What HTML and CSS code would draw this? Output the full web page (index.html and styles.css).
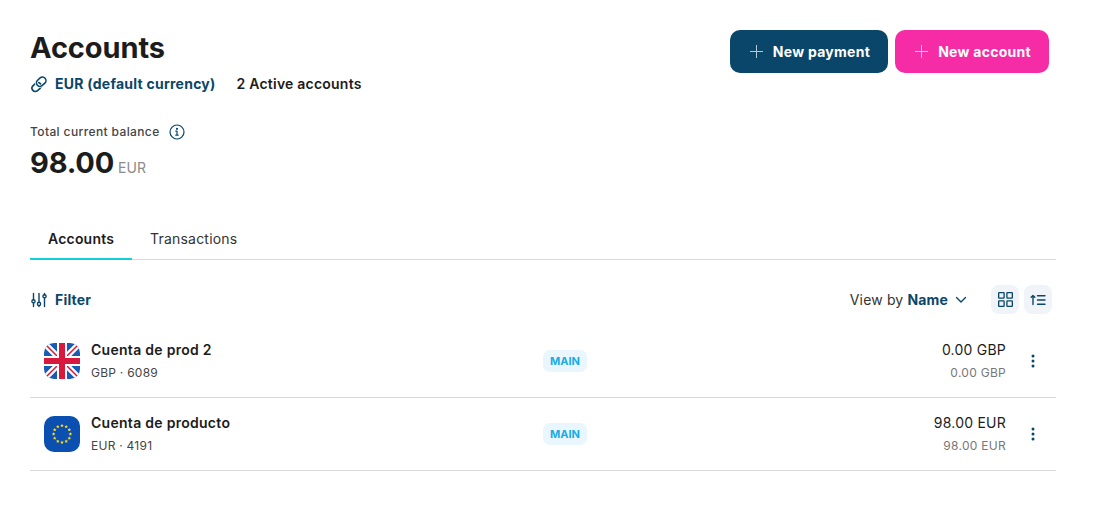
FILE: index.html
```html
<!DOCTYPE html>
<html lang="en">
<head>
  <meta charset="UTF-8" />
  <title>Accounts</title>
  <link rel="stylesheet" href="styles.css">
</head>
<body>

<div class="page">
  <div class="top">
    <div>
      <h1 class="title">Accounts</h1>
      <div class="meta">
        <span class="currency">
          <svg width="18" height="18" viewBox="0 0 18 18" fill="none" stroke-width="1.6">
            <rect x="1.6" y="8.7" width="10" height="6.6" rx="3.3" transform="rotate(-42 6.6 12)" stroke="#0a4669"/>
            <rect x="6" y="3.2" width="10.4" height="7" rx="3.5" transform="rotate(-42 11.2 6.7)" stroke="#fff" stroke-width="3"/>
            <rect x="6" y="3.2" width="10.4" height="7" rx="3.5" transform="rotate(-42 11.2 6.7)" stroke="#0a4669"/>
          </svg>
          EUR (default currency)
        </span>
        <span class="active">2 Active accounts</span>
      </div>
    </div>
    <div class="actions">
      <button class="btn btn-navy"><span class="plus"></span>New payment</button>
      <button class="btn btn-pink"><span class="plus"></span>New account</button>
    </div>
  </div>

  <div class="balance-label">
    Total current balance
    <svg width="16" height="16" viewBox="0 0 16 16" fill="none" stroke="#0a4669" stroke-width="1.2"><circle cx="8" cy="8" r="7"/><path d="M8 7.2v4M6.8 11.2h2.4M6.8 7.2H8" stroke-linecap="round"/><circle cx="8" cy="4.8" r=".5" fill="#0a4669"/></svg>
  </div>
  <div class="balance"><span class="amount">98.00</span><span class="unit">EUR</span></div>

  <div class="tabs">
    <div class="tab tab-on">Accounts</div>
    <div class="tab">Transactions</div>
  </div>

  <div class="tools">
    <div class="filter">
      <svg width="18" height="18" viewBox="0 0 18 18" fill="none" stroke="#0a4669" stroke-width="1.4" stroke-linecap="round"><path d="M3.5 2.5v6.2M3.5 12v3.5M9 2.5v8.7M9 14.6v.9M14.5 2.5v1.2M14.5 7v8.5"/><circle cx="3.5" cy="10.3" r="1.6"/><circle cx="9" cy="12.9" r="1.6"/><circle cx="14.5" cy="5.3" r="1.6"/></svg>
      Filter
    </div>
    <div class="view">
      <span class="view-by">View by <strong>Name</strong></span>
      <svg class="chev" width="12" height="8" viewBox="0 0 12 8" fill="none" stroke="#0a4669" stroke-width="1.4" stroke-linecap="round" stroke-linejoin="round"><path d="M1.5 1.5 6 6l4.5-4.5"/></svg>
      <span class="icon-btn">
        <svg width="15" height="15" viewBox="0 0 16 16" fill="none" stroke="#0a4669" stroke-width="1.4"><rect x=".7" y=".7" width="5.8" height="5.8" rx=".6"/><rect x="9.5" y=".7" width="5.8" height="5.8" rx=".6"/><rect x=".7" y="9.5" width="5.8" height="5.8" rx=".6"/><rect x="9.5" y="9.5" width="5.8" height="5.8" rx=".6"/></svg>
      </span>
      <span class="icon-btn">
        <svg width="16" height="16" viewBox="0 0 16 16" fill="none" stroke="#0a4669" stroke-width="1.4" stroke-linecap="round" stroke-linejoin="round"><path d="M3 12.5v-9M1.2 5.2 3 3.4l1.8 1.8M7.5 3.7h7.5M7.5 8h7.5M7.5 12.3h7.5"/></svg>
      </span>
    </div>
  </div>

  <div class="row">
    <svg class="flag" width="36" height="36" viewBox="0 0 36 36">
      <rect width="36" height="36" fill="#1a5bb5"/>
      <path d="M0 0 36 36M36 0 0 36" stroke="#fff" stroke-width="6"/>
      <path d="M0 0 36 36M36 0 0 36" stroke="#d8183c" stroke-width="1.5"/>
      <path d="M18 0v36M0 18h36" stroke="#fff" stroke-width="10"/>
      <path d="M18 0v36M0 18h36" stroke="#d8183c" stroke-width="6"/>
    </svg>
    <div class="acct">
      <div class="acct-name">Cuenta de prod 2</div>
      <div class="acct-sub">GBP · 6089</div>
    </div>
    <span class="badge">MAIN</span>
    <div class="money">
      <div class="money-main">0.00 GBP</div>
      <div class="money-sub">0.00 GBP</div>
    </div>
    <svg class="dots" width="4" height="14" viewBox="0 0 4 14" fill="#0a4669"><circle cx="2" cy="2" r="1.5"/><circle cx="2" cy="7" r="1.5"/><circle cx="2" cy="12" r="1.5"/></svg>
  </div>

  <div class="row">
    <svg class="flag" width="36" height="36" viewBox="0 0 36 36" fill="#ffdb1a">
      <defs><polygon id="star" points="0,-1.8 .55,-.7 1.7,-.55 .9,.3 1.05,1.5 0,.9 -1.05,1.5 -.9,.3 -1.7,-.55 -.55,-.7"/></defs>
      <rect width="36" height="36" fill="#0b4fb0"/>
      <use href="#star" x="18" y="9.6"/><use href="#star" x="22.2" y="10.7"/><use href="#star" x="25.3" y="13.8"/>
      <use href="#star" x="26.4" y="18"/><use href="#star" x="25.3" y="22.2"/><use href="#star" x="22.2" y="25.3"/>
      <use href="#star" x="18" y="26.4"/><use href="#star" x="13.8" y="25.3"/><use href="#star" x="10.7" y="22.2"/>
      <use href="#star" x="9.6" y="18"/><use href="#star" x="10.7" y="13.8"/><use href="#star" x="13.8" y="10.7"/>
    </svg>
    <div class="acct">
      <div class="acct-name">Cuenta de producto</div>
      <div class="acct-sub">EUR · 4191</div>
    </div>
    <span class="badge">MAIN</span>
    <div class="money">
      <div class="money-main">98.00 EUR</div>
      <div class="money-sub">98.00 EUR</div>
    </div>
    <svg class="dots" width="4" height="14" viewBox="0 0 4 14" fill="#0a4669"><circle cx="2" cy="2" r="1.5"/><circle cx="2" cy="7" r="1.5"/><circle cx="2" cy="12" r="1.5"/></svg>
  </div>
</div>

</body>
</html>
```

FILE: styles.css
```css
body {
  margin: 0;
  background: white;
  font-family: Inter, 'Liberation Sans', sans-serif;
  color: #1c1c1c;
  letter-spacing: 0.28px;
}
.page {
  width: 1026px;
  padding: 30px 47px 0 30px;
}
.top {
  display: flex;
  justify-content: space-between;
  align-items: flex-start;
}
.title {
  margin: 0;
  font-size: 29px;
  line-height: 36px;
  font-weight: 700;
  letter-spacing: -0.1px;
}
.meta {
  display: flex;
  gap: 21px;
  margin-top: 7px;
  font-size: 14px;
  line-height: 22px;
  font-weight: 600;
  letter-spacing: 0.22px;
}
.currency {
  display: flex;
  align-items: center;
  gap: 7px;
  font-weight: 700;
  letter-spacing: 0.25px;
  color: #0a4669;
}
.actions {
  display: flex;
  gap: 7px;
  margin-right: 7px;
}
.btn {
  display: flex;
  align-items: center;
  height: 43px;
  padding: 0 18px 0 20px;
  border: 0;
  border-radius: 10px;
  color: white;
  font-family: inherit;
  font-size: 14px;
  font-weight: 700;
  letter-spacing: 0.28px;
}
.btn-navy {
  background: #0a4669;
}
.btn-pink {
  background: #f52ca5;
}
.plus {
  width: 13px;
  height: 13px;
  margin-right: 10px;
  opacity: 0.7;
  background:
    linear-gradient(white, white) center / 100% 1.4px no-repeat,
    linear-gradient(white, white) center / 1.4px 100% no-repeat;
}
.balance-label {
  display: flex;
  align-items: center;
  gap: 9px;
  margin-top: 27px;
  font-size: 12px;
  line-height: 20px;
  font-weight: 500;
  letter-spacing: 0.38px;
  color: #444;
}
.balance {
  display: flex;
  align-items: baseline;
  gap: 4px;
  margin-top: 1px;
}
.amount {
  font-size: 29px;
  line-height: 40px;
  font-weight: 700;
  letter-spacing: -0.2px;
}
.unit {
  font-size: 14px;
  letter-spacing: 0;
  color: #8c8c8c;
}
.tabs {
  display: flex;
  margin-top: 36px;
  border-bottom: 1px solid #d9d9d9;
}
.tab {
  padding: 0 18px;
  font-size: 14px;
  line-height: 40px;
  height: 40px;
  letter-spacing: 0.2px;
  color: #333;
}
.tab-on {
  font-weight: 600;
  color: #1c1c1c;
  border-bottom: 2px solid #10cfd6;
  border-radius: 1px;
  height: 39px;
  margin-bottom: -1px;
}
.tools {
  display: flex;
  justify-content: space-between;
  align-items: center;
  margin-top: 25px;
  padding-right: 4px;
  height: 29px;
}
.filter {
  display: flex;
  align-items: center;
  gap: 7px;
  font-size: 14px;
  font-weight: 700;
  letter-spacing: 0.2px;
  color: #0a4669;
}
.view {
  display: flex;
  align-items: center;
  font-size: 14px;
  letter-spacing: 0.15px;
  color: #333;
}
.view-by strong {
  font-weight: 700;
  color: #0a4669;
}
.chev {
  margin: 0 24px 0 7px;
}
.icon-btn {
  display: flex;
  align-items: center;
  justify-content: center;
  width: 28px;
  height: 29px;
  margin-left: 5px;
  border-radius: 8px;
  background: #f0f4f8;
}
.chev + .icon-btn {
  margin-left: 0;
}
.row {
  display: flex;
  align-items: center;
  height: 72px;
  border-bottom: 1px solid #d9d9d9;
  padding-left: 14px;
}
.tools + .row {
  margin-top: 11px;
}
.flag {
  flex: none;
  border-radius: 10px;
}
.acct {
  width: 452px;
  margin-left: 11px;
}
.acct-name {
  font-size: 14px;
  line-height: 20px;
  font-weight: 600;
  letter-spacing: 0.28px;
}
.acct-sub {
  margin-top: 4px;
  font-size: 12px;
  line-height: 18px;
  letter-spacing: 0.25px;
  color: #444;
}
.badge {
  padding: 0 7px;
  height: 22px;
  line-height: 22px;
  border-radius: 7px;
  background: #e9f6fd;
  color: #17ace6;
  font-size: 11px;
  font-weight: 700;
  letter-spacing: 0;
}
.money {
  flex: 1;
  text-align: right;
}
.money-main {
  font-size: 14px;
  line-height: 20px;
  letter-spacing: 0.22px;
}
.money-sub {
  margin-top: 4px;
  font-size: 12px;
  line-height: 18px;
  color: #777;
}
.dots {
  margin: 0 21px 0 25px;
}
```
